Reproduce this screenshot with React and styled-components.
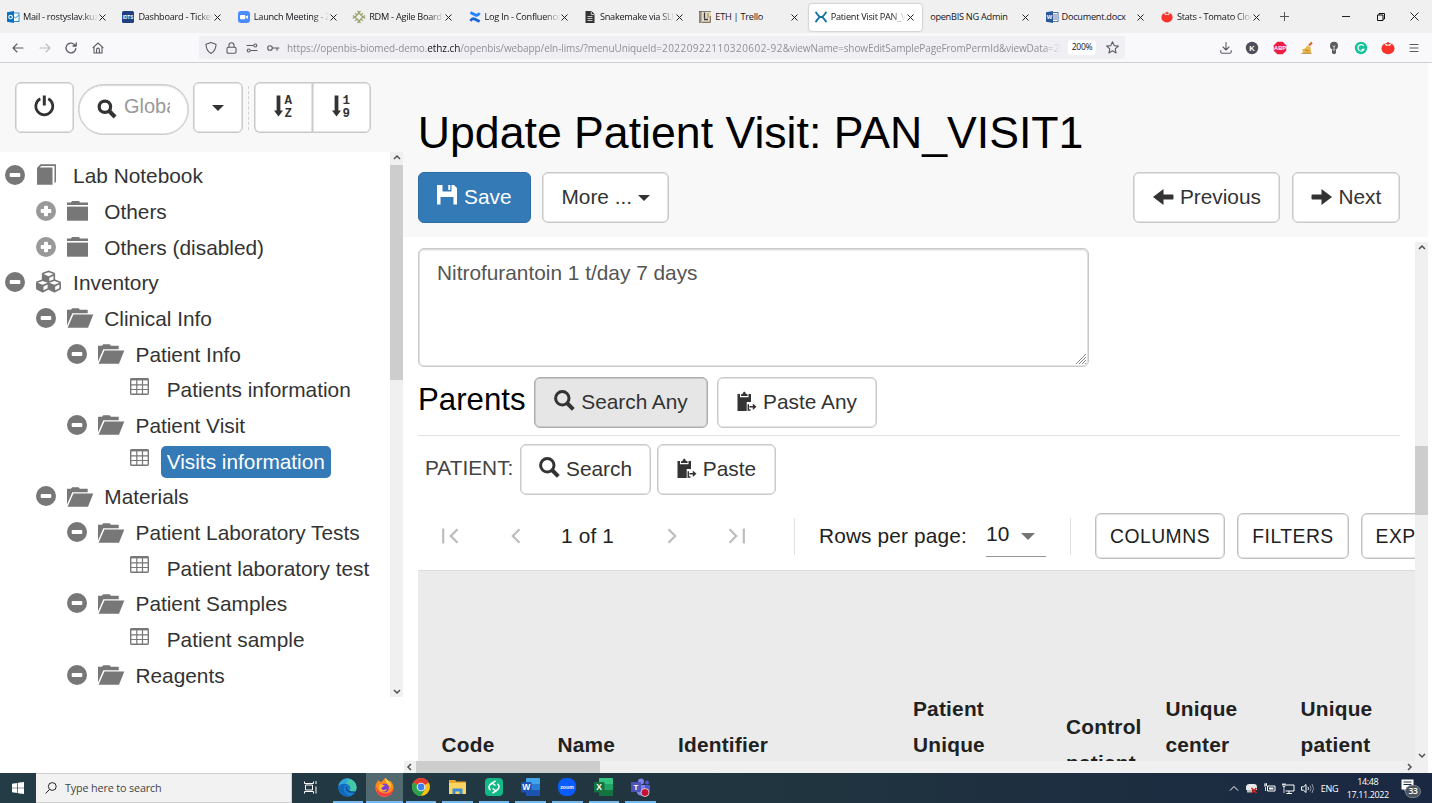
import React from "react";
import styled, { createGlobalStyle, css } from "styled-components";
import { FaCubes } from "react-icons/fa";

const GlobalStyle = createGlobalStyle`
  * { box-sizing: border-box; }
  body { margin: 0; background: #fff; overflow: hidden; }
  svg { display: block; flex: none; overflow: visible; }
`;

const sans = '"Liberation Sans", Arial, sans-serif';
const ui = '"Open Sans", "Noto Sans", sans-serif';

const Screen = styled.div`
  width: 1432px;
  height: 803px;
  display: flex;
  flex-direction: column;
  overflow: hidden;
  font-family: ${sans};
  font-size: 20.83px;
  color: #333;
  background: #fff;
`;

/* ---------- browser chrome ---------- */

const TabStrip = styled.div`
  height: 33px;
  flex: none;
  display: flex;
  align-items: center;
  background: #f0f0f0;
`;
const Tab = styled.div`
  width: 115.4px;
  height: 33px;
  flex: none;
  display: flex;
  align-items: center;
  padding: 3px 2px 2px 1px;
`;
const TabFace = styled.div`
  width: 113px;
  height: 27px;
  display: flex;
  align-items: center;
  padding: 0 8px 0 6px;
  border-radius: 3px;
  ${(p) => p.$active && css`background: #fff; box-shadow: 0 0 2px rgba(0, 0, 0, 0.4);`}
`;
const TabIcon = styled.span`
  width: 12px;
  height: 12px;
  margin-right: 4px;
  flex: none;
`;
const TabTitle = styled.span`
  flex: 1;
  min-width: 0;
  overflow: hidden;
  white-space: nowrap;
  font: 9.2px/14px ${ui};
  letter-spacing: -0.27px;
  color: #15141a;
  ${(p) => p.$fade && css`mask-image: linear-gradient(to right, #000 78%, transparent 99%);`}
`;
const NewTab = styled.div`
  flex: 1;
  padding-left: 10.5px;
`;
const WindowControls = styled.div`
  display: flex;
  align-items: center;
  gap: 25.5px;
  padding-right: 13px;
`;
const NavBar = styled.div`
  height: 30px;
  flex: none;
  display: flex;
  align-items: center;
  background: #f9f9fb;
  border-bottom: 1px solid #cfcfd3;
`;
const NavButtons = styled.div`
  width: 199px;
  flex: none;
  display: flex;
  align-items: center;
  gap: 14.7px;
  padding-left: 12px;
`;
const UrlBar = styled.div`
  width: 926px;
  height: 23px;
  flex: none;
  display: flex;
  align-items: center;
  background: #f0f0f4;
  border-radius: 3px;
  padding: 0 6px;
`;
const UrlIcons = styled.div`
  width: 82px;
  flex: none;
  display: flex;
  align-items: center;
  gap: 9px;
`;
const Url = styled.div`
  width: 775px;
  flex: none;
  overflow: hidden;
  white-space: nowrap;
  font: 10px/16px ${ui};
  letter-spacing: -0.1px;
  color: #8f8f98;
  mask-image: linear-gradient(to right, #000 97.5%, transparent 100%);
  b { font-weight: 400; color: #15141a; }
`;
const UrlDigits = styled.span`
  letter-spacing: 0.45px;
`;
const ZoomBadge = styled.div`
  width: 31px;
  height: 15px;
  margin: 0 10px 0 6px;
  border-radius: 3px;
  background: #fff;
  font: 8.6px/15px ${ui};
  letter-spacing: -0.3px;
  text-align: center;
  color: #15141a;
`;
const Extensions = styled.div`
  flex: 1;
  display: flex;
  align-items: center;
  justify-content: flex-end;
  gap: 13.1px;
  padding-right: 12px;
`;

/* ---------- page ---------- */

const Page = styled.div`
  width: 1428px;
  height: 710px;
  flex: none;
  display: flex;
`;
const Sidebar = styled.aside`
  width: 404px;
  flex: none;
  display: flex;
  flex-direction: column;
`;
const SidebarTools = styled.div`
  height: 89px;
  flex: none;
  display: flex;
  align-items: flex-start;
  padding: 19px 0 0 15px;
  background: #f8f8f8;
`;
const Button = styled.button`
  height: ${(p) => p.$h || 50.6}px;
  width: ${(p) => (p.$w ? p.$w + "px" : "auto")};
  flex: none;
  display: flex;
  align-items: center;
  justify-content: ${(p) => (p.$start ? "flex-start" : "center")};
  gap: 6px;
  padding: 0 0 ${(p) => (p.$mui ? 0 : 1)}px ${(p) => p.$start || 0}px;
  margin: 0 ${(p) => p.$mr || 0}px 0 0;
  font: ${(p) => (p.$mui ? "19.34px" : "20.83px")} ${sans};
  letter-spacing: ${(p) => (p.$mui ? "0.5px" : "0")};
  white-space: nowrap;
  color: #333;
  background: #fff;
  border: 1px solid #c9c9c9;
  box-shadow: inset 0 0 0 0.5px #c9c9c9;
  border-radius: 6px;
  ${(p) => p.$mui && css`color: #212121; border-color: #c0c0c0;`}
  ${(p) => p.$primary && css`color: #fff; background: #337ab7; border-color: #2e6da4; box-shadow: none;`}
  ${(p) => p.$pressed && css`background: #e6e6e6; border-color: #adadad; box-shadow: inset 0 0 0 0.5px #adadad;`}
`;
const Raised = styled.span`
  padding-bottom: 2px;
`;
const SearchPill = styled.div`
  width: 111px;
  height: 50.6px;
  margin: 2px 4px 0;
  display: flex;
  align-items: center;
  padding: 0 17px 7px 18px;
  border: 1.4px solid #ccc;
  border-radius: 26px;
  background: #fff;
  box-shadow: inset 0 0 0 0.5px #ccc, inset 0 1px 2px rgba(0, 0, 0, 0.1);
`;
const SearchHint = styled.span`
  width: 45.5px;
  margin-left: 7px;
  overflow: hidden;
  white-space: nowrap;
  color: #999;
  font-size: 20px;
  line-height: 26px;
`;
const DashedRule = styled.div`
  height: 44px;
  margin: 4px 5px 0;
  border-left: 1px dashed #d0d0d0;
`;
const ButtonGroup = styled.div`
  display: flex;
  > :first-child { border-radius: 6px 0 0 6px; border-right: 0; }
  > :last-child { border-radius: 0 6px 6px 0; }
`;
const TreePane = styled.div`
  height: 545px;
  width: 403px;
  display: flex;
  overflow: hidden;
`;
const Tree = styled.div`
  flex: 1;
  padding-top: 6.3px;
`;
const TreeRow = styled.div`
  height: 35.7px;
  display: flex;
  align-items: center;
  padding-left: ${(p) => 5 + p.$level * 31.2}px;
`;
const TreeToggle = styled.span`
  width: 20px;
  margin: -2px 11px 0 0;
`;
const TreeGlyph = styled.span`
  width: 31px;
  margin-top: ${(p) => p.$shift}px;
  display: flex;
  color: #777;
`;
const TreeLabel = styled.span`
  height: 32px;
  padding: 0 6.5px 0 6.1px;
  line-height: 32.6px;
  border-radius: 5px;
  white-space: nowrap;
  ${(p) => p.$selected && css`color: #fff; background: #337ab7;`}
`;

const ScrollBar = styled.div`
  flex: none;
  display: flex;
  align-items: center;
  justify-content: space-between;
  background: #f0f0f0;
  ${(p) => (p.$horizontal ? css`height: 12px;` : css`width: 13px; flex-direction: column;`)}
`;
const ScrollTrack = styled.div`
  flex: 1;
  align-self: stretch;
  ${(p) => (p.$horizontal ? css`padding-left: ${p.$offset}px;` : css`padding-top: ${p.$offset}px;`)}
`;
const ScrollThumb = styled.div`
  background: #cdcdcd;
  ${(p) => (p.$horizontal ? css`height: 12px; width: ${p.$size}px;` : css`height: ${p.$size}px;`)}
`;
const ArrowBox = styled.span`
  width: 12px;
  height: 12px;
  display: flex;
  align-items: center;
  justify-content: center;
`;

const Main = styled.main`
  flex: 1;
  min-width: 0;
  display: flex;
  flex-direction: column;
`;
const FormHeader = styled.header`
  height: 174px;
  flex: none;
  margin-left: -1px;
  padding: 44px 27.6px 0 14.8px;
  background: #f8f8f8;
`;
const Title = styled.h1`
  margin: 0;
  height: 65px;
  font: 400 44.63px/52px ${sans};
  color: #000;
  white-space: nowrap;
`;
const ActionRow = styled.div`
  display: flex;
  align-items: center;
`;
const Spacer = styled.div`
  flex: 1;
`;
const Caret = styled.i`
  width: 0;
  height: 0;
  border: ${(p) => p.$size || 6}px solid transparent;
  border-top-color: ${(p) => p.$color || "#333"};
  border-bottom: 0;
  margin-top: ${(p) => p.$drop || 3}px;
`;
const FormPane = styled.div`
  height: 519px;
  margin-top: 5px;
  flex: none;
  display: flex;
`;
const FormBody = styled.div`
  flex: 1;
  min-width: 0;
  padding: 6px 0 0 14px;
  overflow: hidden;
`;
const NoteField = styled.div`
  width: 671px;
  height: 119px;
  display: flex;
  justify-content: space-between;
  padding: 9px 1px 1px 18px;
  border: 1px solid #c9c9c9;
  border-radius: 6px;
  box-shadow: inset 0 0 0 0.5px #c9c9c9, inset 0 2px 2px rgba(0, 0, 0, 0.07);
  color: #555;
  line-height: 29px;
  svg { align-self: flex-end; }
`;
const SectionRow = styled.div`
  width: 982px;
  height: 69px;
  display: flex;
  align-items: flex-start;
  padding-top: 10px;
  border-bottom: 1px solid #e0e0e0;
`;
const SectionTitle = styled.h2`
  width: 116px;
  margin: 0;
  font: 400 31.2px/45px ${sans};
  color: #000;
`;
const ParentRow = styled.div`
  height: 67px;
  display: flex;
  align-items: flex-start;
  padding: 8px 0 0 7px;
`;
const ParentLabel = styled.span`
  width: 95px;
  line-height: 47px;
  color: #444;
`;
const Pager = styled.div`
  height: 67px;
  display: flex;
  align-items: center;
  padding: 0 0 1px 19px;
  color: #212121;
  letter-spacing: 0.15px;
  white-space: nowrap;
`;
const PagerIcon = styled.span`
  width: 26px;
  flex: none;
  margin-right: ${(p) => p.$mr}px;
  display: flex;
  justify-content: center;
`;
const PagerText = styled.span`
  width: ${(p) => p.$w}px;
  flex: none;
`;
const PagerRule = styled.span`
  width: 1px;
  height: 37px;
  flex: none;
  margin-right: ${(p) => p.$mr}px;
  background: #e2e2e2;
`;
const Select = styled.div`
  width: 60px;
  height: 41px;
  flex: none;
  display: flex;
  align-items: center;
  justify-content: space-between;
  padding: 0 11px 3px 0;
  margin-right: 24px;
  border-bottom: 1.5px solid #949494;
`;
const HeaderRow = styled.div`
  width: 1100px;
  height: 350px;
  display: flex;
  align-items: center;
  padding: 0 0 2px 23.5px;
  border-top: 1px solid #dcdcdc;
  background: #ebebeb;
`;
const HeaderCell = styled.div`
  width: ${(p) => p.$w}px;
  flex: none;
  padding-bottom: ${(p) => p.$pad || 0}px;
  font-weight: 700;
  letter-spacing: 0.22px;
  line-height: 35.7px;
  white-space: pre-line;
  color: #212121;
`;

/* ---------- taskbar ---------- */

const Taskbar = styled.footer`
  height: 30px;
  flex: none;
  display: flex;
  background: linear-gradient(to right, #233c45, #20343f 55%, #1a2842);
`;
const StartButton = styled.div`
  width: 36px;
  display: flex;
  align-items: center;
  justify-content: center;
`;
const TaskSearch = styled.div`
  width: 256px;
  height: 30px;
  display: flex;
  align-items: center;
  gap: 8px;
  padding-left: 9px;
  border: 1px solid #cfcfcf;
  border-left: 0;
  background: #f2f2f2;
  font: 10.8px/20px ${ui};
  letter-spacing: -0.15px;
  color: #444;
`;
const TaskButton = styled.div`
  width: ${(p) => (p.$first ? 37.5 : 36.6)}px;
  height: 30px;
  flex: none;
  display: flex;
  flex-direction: column;
  align-items: center;
  padding: 5px ${(p) => (p.$focused ? 0 : 3)}px 0;
  background: ${(p) => (p.$focused ? "#526970" : "transparent")};
`;
const RunningBar = styled.span`
  align-self: stretch;
  height: 2px;
  margin-top: auto;
  background: ${(p) => (p.$on ? "#76b9ed" : "transparent")};
`;
const Tray = styled.div`
  display: flex;
  align-items: center;
  gap: 6.2px;
  padding-right: 12px;
  color: #fff;
  font: 9px/13px ${ui};
  letter-spacing: -0.4px;
`;
const Clock = styled.div`
  width: 44px;
  margin-right: 5px;
  text-align: center;
  white-space: nowrap;
`;
const Lang = styled.span`
  width: 19px;
  letter-spacing: -0.2px;
`;
const Notifications = styled.div`
  width: 19px;
  height: 20px;
  position: relative;
`;
const Count = styled.span`
  position: absolute;
  left: 4px;
  top: 7px;
  width: 16px;
  height: 13px;
  border-radius: 7px;
  background: #4a535e;
  border: 1px solid #7a838c;
  font: 600 8.6px/11px ${ui};
  text-align: center;
`;

/* ---------- icons ---------- */

const Svg = ({ w = 12, h = w, vb, children, ...rest }) => (
  <svg width={w} height={h} viewBox={vb || `0 0 ${w} ${h}`} fill="none" {...rest}>
    {children}
  </svg>
);
const Letter = ({ x, y, size, fill = "#fff", family = "Liberation Sans, sans-serif", children }) => (
  <text x={x} y={y} fontSize={size} fontWeight="700" fill={fill} textAnchor="middle" fontFamily={family} letterSpacing="0">
    {children}
  </text>
);
const Cross = ({ s = 7 }) => (
  <Svg w={s}><path d={`M.5.5 ${s - 0.5} ${s - 0.5}M${s - 0.5}.5.5 ${s - 0.5}`} stroke="#222" /></Svg>
);
const Tomato = ({ w = 12 }) => (
  <Svg w={w} vb="0 0 12 12">
    <ellipse cx="6" cy="6.4" rx="5.6" ry="5" fill="#f9322c" />
    <path d="M2.6 2 6 3 9.4 2 7.6 4.3 6 3.8 4.4 4.3Z" fill="#fde9e2" />
    <path d="M6 3V.8" stroke="#d22" />
  </Svg>
);

const tabIcons = {
  mail: (
    <Svg><rect x="5" y="2" width="7" height="8.5" fill="#fff" stroke="#2a8dd4" /><path d="M5 4l3.5 3L12 4" stroke="#2a8dd4" /><path d="M0 1.2 7 0v12L0 10.8z" fill="#0a71c4" /><circle cx="3.6" cy="6" r="1.8" stroke="#fff" strokeWidth="1.1" /></Svg>
  ),
  dash: (<Svg><rect width="12" height="12" rx="1.5" fill="#1f3f7f" /><Letter x={6} y={7.8} size={4.6}>IDTS</Letter></Svg>),
  zoom: (<Svg><rect width="12" height="12" rx="3" fill="#4a8cff" /><rect x="2" y="4" width="5.4" height="4.2" rx="1" fill="#fff" /><path d="M7.9 5.6 10 4.2v3.8L7.9 6.6z" fill="#fff" /></Svg>),
  rdm: (<Svg><path d="M6 2 10 6 6 10 2 6Z" stroke="#9aa36b" strokeWidth="1.4" /><path d="M4.5 0 6 1.6 7.5 0M4.5 12 6 10.4 7.5 12M0 4.5 1.6 6 0 7.5M12 4.5 10.4 6 12 7.5M2.2 2.2l1.4 1.4M9.8 2.2 8.4 3.6M2.2 9.8l1.4-1.4M9.8 9.8 8.4 8.4" stroke="#9aa36b" strokeWidth="1.3" /></Svg>),
  conf: (<Svg><path d="M.3 9.2c2-3 3.6-3.6 6-2.4l5 2.4-1.3 2.6-4.6-2.2c-1.5-.7-2-.2-2.9 1.1z" fill="#1868db" /><path d="M11.7 2.8c-2 3-3.6 3.6-6 2.4l-5-2.4L2 .2l4.6 2.2c1.5.7 2 .2 2.9-1.1z" fill="#2684ff" /></Svg>),
  snake: (<Svg><path d="M1.5 0h6L10.5 3v9h-9z" fill="#333" /><path d="M3.5 5.5h5M3.5 7.5h5M3.5 9.5h5M7.3.5v3h3" stroke="#f0f0f0" strokeWidth=".8" /></Svg>),
  trello: (<Svg><rect width="12" height="12" fill="#e4dccb" /><rect width="2.5" height="12" fill="#8d877b" /><path d="M5.5 1.5v6M5 8.5h4" stroke="#3c3a37" strokeWidth="1.3" /><rect x="8" y="2" width="2" height="5" fill="#c9ac7e" /><path d="M3 11.3h8.3V5" stroke="#6c5a48" /><path d="M0 .5h12" stroke="#5a564e" strokeWidth=".7" /></Svg>),
  bis: (<Svg><path d="M.8.8c.9 2.6 2.7 3.7 4 5.2-1.3 1.5-3.1 2.6-4 5.2M11.2.8c-.9 2.6-2.7 3.7-4 5.2 1.3 1.5 3.1 2.6 4 5.2" stroke="#12719f" strokeWidth="1.9" /><path d="M4.5 6h3" stroke="#12719f" strokeWidth="2" /></Svg>),
  word: (<Svg><rect x="6" y="1.5" width="6" height="9" fill="#fff" stroke="#2a579a" strokeWidth=".8" /><path d="M7 4h4M7 6h4M7 8h4" stroke="#2a579a" strokeWidth=".8" /><path d="M0 1.2 7 0v12L0 10.8z" fill="#2a579a" /><Letter x={3.5} y={8.2} size={5.8}>W</Letter></Svg>),
  tomato: <Tomato />,
};

const tabs = [
  { icon: "mail", title: "Mail - rostyslav.kuzyk", fade: true },
  { icon: "dash", title: "Dashboard - Ticket", fade: true },
  { icon: "zoom", title: "Launch Meeting - Z", fade: true },
  { icon: "rdm", title: "RDM - Agile Board", fade: true },
  { icon: "conf", title: "Log In - Confluence", fade: true },
  { icon: "snake", title: "Snakemake via SLUR", fade: true },
  { icon: "trello", title: "ETH | Trello" },
  { icon: "bis", title: "Patient Visit PAN_VIS", fade: true, active: true },
  { title: "openBIS NG Admin" },
  { icon: "word", title: "Document.docx" },
  { icon: "tomato", title: "Stats - Tomato Clock", fade: true },
];

const stroke = { stroke: "#5b5b66", strokeWidth: 1.1, strokeLinecap: "round", strokeLinejoin: "round" };

function BrowserChrome() {
  return (
    <>
      <TabStrip>
        {tabs.map((t) => (
          <Tab key={t.title}>
            <TabFace $active={t.active}>
              {t.icon && <TabIcon>{tabIcons[t.icon]}</TabIcon>}
              <TabTitle $fade={t.fade}>{t.title}</TabTitle>
              <Cross />
            </TabFace>
          </Tab>
        ))}
        <NewTab><Svg w={9}><path d="M4.5 0v9M0 4.5h9" stroke="#555" /></Svg></NewTab>
        <WindowControls>
          <Svg w={9}><path d="M0 4.5h8" stroke="#222" /></Svg>
          <Svg w={8}><path d="M.5 2h5.5v5.5H.5zM2 2V.5h5.5V6H6" stroke="#111" /></Svg>
          <Cross s={9} />
        </WindowControls>
      </TabStrip>
      <NavBar>
        <NavButtons>
          <Svg {...stroke}><path d="M11 6H1M5 2 1 6l4 4" /></Svg>
          <Svg {...stroke} stroke="#bcbcc2"><path d="M1 6h10M7 2l4 4-4 4" /></Svg>
          <Svg {...stroke} strokeWidth="1.3"><path d="M10.8 6.5A4.9 4.9 0 1 1 9.3 2.5L11 4M11.2.8V4H8" /></Svg>
          <Svg {...stroke}><path d="M1 5.6 6 1l5 4.6M2 5v6h8V5M4.6 11V7.5a1.4 1.4 0 0 1 2.8 0V11" /></Svg>
        </NavButtons>
        <UrlBar>
          <UrlIcons>
            <Svg {...stroke}><path d="M6 .6 11 2.3c0 4.5-1 7-5 9.2C2 9.3 1 6.8 1 2.3Z" /></Svg>
            <Svg {...stroke} w={11} h={12}><rect x="1" y="5.3" width="9" height="6" rx="1.2" /><path d="M3 5V3.2a2.5 2.5 0 0 1 5 0V5" /></Svg>
            <Svg {...stroke}><path d="M1 3.5h6M5 8.5h6" /><circle cx="9.3" cy="3.5" r="1.5" /><circle cx="2.7" cy="8.5" r="1.5" /></Svg>
            <Svg {...stroke}><circle cx="3" cy="6" r="2.3" /><path d="M5.5 6H12M10 6v2.2" /></Svg>
          </UrlIcons>
          <Url>
            https://openbis-biomed-demo.<b>ethz.ch</b>
            /openbis/webapp/eln-lims/?menuUniqueId=<UrlDigits>20220922110320602-92</UrlDigits>&amp;viewName=showEditSamplePageFromPermId&amp;viewData=202
          </Url>
          <ZoomBadge>200%</ZoomBadge>
          <Svg {...stroke} w={13}><path d="M6.5.8 8.2 4.6l4.2.4-3.2 2.8.9 4.2-3.6-2.2L2.9 12l.9-4.2L.6 5l4.2-.4Z" /></Svg>
        </UrlBar>
        <Extensions>
          <Svg {...stroke} w={12}><path d="M6 .5v7M3 5l3 3 3-3M.8 8.5v1.2a1.5 1.5 0 0 0 1.5 1.5h7.4a1.5 1.5 0 0 0 1.5-1.5V8.5" /></Svg>
          <Svg w={14}><circle cx="7" cy="7" r="6.2" fill="#4f4f5c" /><Letter x={7} y={9.8} size={7.6}>K</Letter></Svg>
          <Svg w={14}><path d="M4.3.8h5.4l3.5 3.5v5.4l-3.5 3.5H4.3L.8 9.7V4.3z" fill="#ed1e45" /><Letter x={7} y={9} size={5.6}>ABP</Letter></Svg>
          <Svg w={14}><path d="M12 1.5 9 4.5" stroke="#d9652c" strokeWidth="2.2" /><path d="M2 8.5Q6 8 7 4.5l3.5 1.5.5 6H3.5z" fill="#e9b64a" /><path d="M5 9l4 1M1.5 12.3h10" stroke="#b9802b" /></Svg>
          <Svg w={14}><circle cx="7" cy="4.8" r="4" fill="#5b5b5b" /><path d="M5 8.5h4v3.7l-2 1-2-1z" fill="#5b5b5b" /><path d="M5.8 4.5 7 6l1.2-1.5M7 6v4" stroke="#eee" strokeWidth=".8" /></Svg>
          <Svg w={14}><circle cx="7" cy="7" r="6.2" fill="#15c39a" /><path d="M9.8 5A3.2 3.2 0 1 0 10 8.3H7.8" stroke="#fff" strokeWidth="1.2" /></Svg>
          <Tomato w={14} />
          <Svg w={12}><path d="M1.5 2.5h9M1.5 6h9M1.5 9.5h9" stroke="#5b5b66" /></Svg>
        </Extensions>
      </NavBar>
    </>
  );
}

const Magnifier = () => (
  <Svg w={21}><circle cx="8.3" cy="8.3" r="6.7" stroke="currentColor" strokeWidth="3" /><path d="m13 13 6.3 6.3" stroke="currentColor" strokeWidth="4" /></Svg>
);
const PasteIcon = () => (
  <Svg w={20} vb="0 .5 20 20">
    <path d="M.5 2.5H3v3.2h8.5V2.5H14v8H9.7V19.5H.5z" fill="currentColor" />
    <path d="M4 4.5V3l2-.9C6 .8 6.6.2 7.3.2s1.3.6 1.3 1.9l2 .9v1.5z" fill="currentColor" />
    <path d="M11.3 12.8V18.5h2.2M12.5 15.2h4" stroke="currentColor" strokeWidth="1.5" />
    <path d="M15.8 12 19.5 15.2 15.8 18.4z" fill="currentColor" />
  </Svg>
);
const Toggle = ({ open }) => (
  <Svg w={20}>
    <circle cx="10" cy="10" r="10" fill={open ? "#777" : "#999"} />
    <rect x="4.7" y="8" width="10.6" height="4" rx="1" fill="#fff" />
    {!open && <rect x="8" y="4.7" width="4" height="10.6" rx="1" fill="#fff" />}
  </Svg>
);
const glyphs = {
  book: (<Svg w={21}><path d="M1 4 4.5.3H20v17.5l-1.5 1.5V2H5.2L3.8 3.5H16.5V20.7H1z" fill="#777" /></Svg>),
  folder: (<Svg w={22} h={20}><path d="M0 4V1.5h4L5 0h7l1 1.5h8V4z" fill="#777" /><path d="M0 5.6h21V19.7H0z" fill="#777" /></Svg>),
  folderOpen: (<Svg w={27} h={20}><path d="M0 17.5V1.8h4L5.2.2h6.5l1.2 1.6h7.8v3.4H5.3z" fill="#777" /><path d="M6.4 6.6H26.3L21 19.7H.6z" fill="#777" /></Svg>),
  table: (<Svg w={20} h={17}><rect x=".7" y=".7" width="17.6" height="15.6" rx="1" stroke="#777" strokeWidth="1.4" /><path d="M.5 1.5h18" stroke="#777" strokeWidth="1.8" /><path d="M0 6.8h19M0 11.5h19M6.8 2v14M12.5 2v14" stroke="#777" strokeWidth="1.2" /></Svg>),
  cubes: <FaCubes size={25} />,
};
const glyphShift = { book: -3, folder: -1, folderOpen: -1, table: -8, cubes: -4 };
const nodes = [
  [0, "book", "Lab Notebook", true],
  [1, "folder", "Others", false],
  [1, "folder", "Others (disabled)", false],
  [0, "cubes", "Inventory", true],
  [1, "folderOpen", "Clinical Info", true],
  [2, "folderOpen", "Patient Info", true],
  [3, "table", "Patients information"],
  [2, "folderOpen", "Patient Visit", true],
  [3, "table", "Visits information"],
  [1, "folderOpen", "Materials", true],
  [2, "folderOpen", "Patient Laboratory Tests", true],
  [3, "table", "Patient laboratory test"],
  [2, "folderOpen", "Patient Samples", true],
  [3, "table", "Patient sample"],
  [2, "folderOpen", "Reagents", true],
];

const arrowPaths = { up: "M1 5 4 2l3 3", down: "M1 3l3 3 3-3", left: "M5 1 2 4l3 3", right: "M3 1l3 3-3 3" };
const Arrow = ({ dir }) => (
  <ArrowBox><Svg w={8}><path d={arrowPaths[dir]} stroke="#505050" strokeWidth="1.5" /></Svg></ArrowBox>
);
const Scroller = ({ horizontal, offset, size }) => (
  <ScrollBar $horizontal={horizontal}>
    <Arrow dir={horizontal ? "left" : "up"} />
    <ScrollTrack $horizontal={horizontal} $offset={offset}>
      <ScrollThumb $horizontal={horizontal} $size={size} />
    </ScrollTrack>
    <Arrow dir={horizontal ? "right" : "down"} />
  </ScrollBar>
);

const SortIcon = ({ top, bottom }) => (
  <Svg w={20} h={22} vb="0 .5 20 22">
    <path d="M2.6 0h3.8v15H9L4.5 21 0 15h2.6z" fill="#333" />
    <Letter x={14.3} y={8.7} size={12.5} fill="#333" family="Liberation Mono, monospace">{top}</Letter>
    <Letter x={14.3} y={21} size={12.5} fill="#333" family="Liberation Mono, monospace">{bottom}</Letter>
  </Svg>
);

function SidebarPanel() {
  return (
    <Sidebar>
      <SidebarTools>
        <Button $w={59}>
          <Svg w={21} vb="0 .5 21 21"><path d="M6.3 3.3a8.5 8.5 0 1 0 8 0" stroke="#333" strokeWidth="2.7" /><path d="M10.3 0v10" stroke="#333" strokeWidth="3" /></Svg>
        </Button>
        <SearchPill>
          <Svg w={20} vb="0 -3 21 21"><circle cx="8.3" cy="8.3" r="6" stroke="#333" strokeWidth="3.4" /><path d="m13 13 6 6" stroke="#333" strokeWidth="4.4" /></Svg>
          <SearchHint>Global Search</SearchHint>
        </SearchPill>
        <Button $w={50}><Caret /></Button>
        <DashedRule />
        <ButtonGroup>
          <Button $w={58}><SortIcon top="A" bottom="Z" /></Button>
          <Button $w={59}><SortIcon top="1" bottom="9" /></Button>
        </ButtonGroup>
      </SidebarTools>
      <TreePane>
        <Tree>
          {nodes.map(([level, glyph, label, open]) => (
            <TreeRow key={label} $level={level}>
              <TreeToggle>{open !== undefined && <Toggle open={open} />}</TreeToggle>
              <TreeGlyph $shift={glyphShift[glyph]}>{glyphs[glyph]}</TreeGlyph>
              <TreeLabel $selected={label === "Visits information"}>{label}</TreeLabel>
            </TreeRow>
          ))}
        </Tree>
        <Scroller offset={1} size={215} />
      </TreePane>
    </Sidebar>
  );
}

const ArrowGlyph = ({ flip }) => (
  <Svg w={21} h={18}><path transform={flip ? "translate(21 0) scale(-1 1)" : undefined} d="M0 9 10.5 1v5.4H19.5a1 1 0 0 1 1 1v3.2a1 1 0 0 1-1 1H10.5V17z" fill="#333" /></Svg>
);
const Chevron = ({ dir, bar }) => (
  <Svg w={18} h={16}>
    <g transform={dir === "right" ? "translate(18 0) scale(-1 1)" : undefined} stroke="#bdbdbd" strokeWidth="2.2">
      <path d={bar ? "M16.5 1.3 9.8 8l6.7 6.7M2.2.5v15" : "M12.5 1.3 5.8 8l6.7 6.7"} />
    </g>
  </Svg>
);

function MainPanel() {
  return (
    <Main>
      <FormHeader>
        <Title>Update Patient Visit: PAN_VISIT1</Title>
        <ActionRow>
          <Button $primary $w={113} $mr={11.5}>
            <Svg w={21} h={20} vb="0 2 21 20"><path d="M0 0h5.5v6.5h9V0h2.5l3 3v16.5h-3.5v-7.5h-13v7.5H0z M11.3 0h2v5h-2z" fill="#fff" /></Svg>
            Save
          </Button>
          <Button $w={127}>More ...<Caret /></Button>
          <Spacer />
          <Button $w={147} $mr={12}><ArrowGlyph />Previous</Button>
          <Button $w={108}><ArrowGlyph flip />Next</Button>
        </ActionRow>
      </FormHeader>
      <FormPane>
        <FormBody>
          <NoteField>
            Nitrofurantoin 1 t/day 7 days
            <Svg w={12}><path d="M1 11 11 1M4 11l7-7M7 11l4-4M10 11l1-1" stroke="#777" strokeWidth=".9" /></Svg>
          </NoteField>
          <SectionRow>
            <SectionTitle>Parents</SectionTitle>
            <Button $pressed $w={174} $mr={9}><Raised><Magnifier /></Raised>Search Any</Button>
            <Button $w={160}><PasteIcon />Paste Any</Button>
          </SectionRow>
          <ParentRow>
            <ParentLabel>PATIENT:</ParentLabel>
            <Button $w={131} $mr={6}><Raised><Magnifier /></Raised>Search</Button>
            <Button $w={119}><PasteIcon />Paste</Button>
          </ParentRow>
          <Pager>
            <PagerIcon $mr={40}><Chevron bar /></PagerIcon>
            <PagerIcon $mr={32}><Chevron /></PagerIcon>
            <PagerText $w={97.5}>1 of 1</PagerText>
            <PagerIcon $mr={39}><Chevron dir="right" /></PagerIcon>
            <PagerIcon $mr={44.5}><Chevron dir="right" bar /></PagerIcon>
            <PagerRule $mr={24} />
            <PagerText $w={167}>Rows per page:</PagerText>
            <Select>10<Caret $size={7.5} $drop={5} $color="#757575" /></Select>
            <PagerRule $mr={24} />
            <Button $mui $w={130} $h={46} $mr={12}>COLUMNS</Button>
            <Button $mui $w={112} $h={46} $mr={12}>FILTERS</Button>
            <Button $mui $w={130} $h={46} $start={13.5}>EXPORTS</Button>
          </Pager>
          <HeaderRow>
            <HeaderCell $w={116}>Code</HeaderCell>
            <HeaderCell $w={120.5}>Name</HeaderCell>
            <HeaderCell $w={235}>Identifier</HeaderCell>
            <HeaderCell $w={153} $pad={35.7}>{"Patient\nUnique"}</HeaderCell>
            <HeaderCell $w={99.5}>{"Control\npatient"}</HeaderCell>
            <HeaderCell $w={135} $pad={35.7}>{"Unique\ncenter"}</HeaderCell>
            <HeaderCell $w={120} $pad={35.7}>{"Unique\npatient"}</HeaderCell>
          </HeaderRow>
        </FormBody>
        <Scroller offset={192} size={69} />
      </FormPane>
      <ActionRow>
        <Spacer><Scroller horizontal offset={0} size={184} /></Spacer>
        <ScrollBar $horizontal><ScrollTrack $horizontal $offset={13} /></ScrollBar>
      </ActionRow>
    </Main>
  );
}

const Office = ({ letter, dark, light, mid }) => (
  <Svg w={19} h={18}>
    <rect x="5" y="0" width="14" height="18" rx="1.2" fill={mid} />
    <path d="M5 1.2A1.2 1.2 0 0 1 6.2 0h11.6A1.2 1.2 0 0 1 19 1.2V6H5z" fill={light} />
    <path d="M5 12h14v4.8a1.2 1.2 0 0 1-1.2 1.2H6.2A1.2 1.2 0 0 1 5 16.8z" fill={dark} />
    <rect x="0" y="4" width="10.5" height="10.5" rx="1" fill={dark} />
    <Letter x={5.2} y={12.3} size={8.5}>{letter}</Letter>
  </Svg>
);

const apps = [
  { key: "view", first: true, icon: (<Svg w={14} h={18}><path d="M1.5 7h7v5h-7zM.5 3.5v2h9v-2M.5 15.5v-2h9v2M12 3v3M12 8.5v7" stroke="#fff" /></Svg>) },
  { key: "edge", on: true, icon: (
    <Svg w={19}><circle cx="9.5" cy="9.5" r="9.2" fill="#1b7fd0" /><path d="M.5 8A9.2 9.2 0 0 1 18.7 9.5c0 3-2.2 4.5-4.7 4.5-2 0-2.6-1-2-2 1.5-3-.5-6-4-6C4 6 1.5 7 .5 8z" fill="#45c9a4" /><path d="M.5 8A9.2 9.2 0 0 1 11 .4L8 6C4 6 1.5 7 .5 8z" fill="#2fa6dd" /><path d="M8 7c-3.5 1-3.5 9 4 10.5C7 20 0 16 .5 9 2 5.5 7 5 9.5 7z" fill="#1268bd" /><path d="M9 8.5c-1.5 2 0 6.3 5.5 5.5l2.8.5" stroke="#0f4d97" strokeWidth="1.5" /></Svg>) },
  { key: "firefox", on: true, focused: true, icon: (
    <Svg w={19}><path d="M1 6C2 4.5 2.5 3.5 3 2c.8 1 1.5 1.3 2.5 2C7.5 3.5 8.5 2 10 0c2.5 1.5 3 3 4 4l.8-1.5C17.5 4.5 18.5 7 18.5 10a9 9 0 0 1-18 0c0-1.5 0-3 .5-4z" fill="#ff8a1c" /><path d="M1 8c0 7 4 10.5 8.5 10.5S18 15.5 18.4 11c-2 3-4 4.5-7.4 4.5C6 15.5 2 13 1 8z" fill="#f5364f" /><circle cx="9.7" cy="10" r="4.2" fill="#7a3fd6" /><path d="M4.5 6.5c2-1 3 .5 5 .5 0 2-3 1.5-3 3.5 0 1.5 3 2.5 5.5.5-1.5 4-7.5 3-8.5-.5z" fill="#ffbd2e" /><path d="M10 0c2.5 2 7 4.5 6 10-1-4-6-4-6-10z" fill="#ffd43b" /></Svg>) },
  { key: "chrome", on: true, icon: (
    <Svg w={18}><circle cx="9" cy="9" r="9" fill="#fbc116" /><path d="M9 9 1.2 4.5A9 9 0 0 1 16.8 4.5z" fill="#e33b2e" /><path d="M9 9 1.2 4.5A9 9 0 0 0 9 18l4-7z" fill="#2ba24c" /><circle cx="9" cy="9" r="4.3" fill="#fff" /><circle cx="9" cy="9" r="3.4" fill="#3f7fe8" /></Svg>) },
  { key: "files", on: true, icon: (
    <Svg w={17}><path d="M0 2h6l1.5 1.5H17V16H0z" fill="#e8a92c" /><path d="M0 5h17v11H0z" fill="#fcd462" /><path d="M3.5 16v-5.5h10V16h-3v-2.5h-4V16z" fill="#3c8fd8" /></Svg>) },
  { key: "sync", on: true, icon: (
    <Svg w={18}><rect width="18" height="18" rx="4" fill="#12b886" /><path d="M10.5 3 7 5l3.5 2.5M7 5.5C3.5 6.5 3 10.5 5.5 12M7.5 15l3.5-2-3.5-2.5M11 12.5c3.500-1 4-5 1.500-6.500" stroke="#fff" strokeWidth="1.5" /></Svg>) },
  { key: "word", on: true, icon: <Office letter="W" dark="#1d53b0" mid="#2b7cd3" light="#41a5ee" /> },
  { key: "zoom", on: true, icon: (<Svg w={18}><rect width="18" height="18" rx="8" fill="#0b5cff" /><Letter x={9} y={10.8} size={5.2}>zoom</Letter></Svg>) },
  { key: "excel", on: true, icon: <Office letter="X" dark="#15733f" mid="#21a366" light="#33c481" /> },
  { key: "teams", on: true, icon: (
    <Svg w={19}><circle cx="10" cy="3.5" r="3" fill="#7b83eb" /><circle cx="16" cy="4.5" r="2" fill="#5059c9" /><path d="M6 7h8.5v7a4.5 4.5 0 0 1-8.5 1z" fill="#7b83eb" /><path d="M15 7h4v5a3 3 0 0 1-4 3z" fill="#5059c9" /><rect x="0" y="4" width="10" height="10" rx="1" fill="#4b53bc" /><Letter x={5} y={12} size={8}>T</Letter><circle cx="14" cy="14.5" r="4" fill="#c4112f" stroke="#e7e7ee" strokeWidth=".8" /></Svg>) },
];

function TaskbarPanel() {
  return (
    <Taskbar>
      <StartButton><Svg w={12}><path d="M0 1.7 5.2.9v4.8H0zM5.9.8 12 0v5.7H5.9zM0 6.3h5.2v4.8L0 10.3zM5.9 6.3H12V12l-6.1-.8z" fill="#fff" /></Svg></StartButton>
      <TaskSearch>
        <Svg w={12}><circle cx="7.3" cy="4.5" r="3.9" stroke="#222" /><path d="M4.5 7.5.6 11.5" stroke="#222" /></Svg>
        Type here to search
      </TaskSearch>
      {apps.map((a) => (
        <TaskButton key={a.key} $first={a.first} $focused={a.focused}>{a.icon}<RunningBar $on={a.on} /></TaskButton>
      ))}
      <Spacer />
      <Tray>
        <Svg w={10} h={8}><path d="M1 6.5 5 2.5l4 4" stroke="#fff" /></Svg>
        <Svg w={13} h={12}><path d="M1 8V4.5A3 3 0 0 1 4 2h5a3 3 0 0 1 3 3v3z" fill="#e8e8e8" /><rect x="2" y="8" width="5" height="2.5" fill="#bbb" /><path d="m6.5 6 5 5m0-5-5 5" stroke="#e02020" strokeWidth="1.6" /></Svg>
        <Svg w={12} h={10}><path d="M3.5 3H11v5H3.5z" stroke="#fff" /><path d="M5 4.5h4.5v2H5z" fill="#fff" /><path d="M0 2h3M1 0v4M2.5 0v3M1.5 4v4" stroke="#fff" strokeWidth=".8" /></Svg>
        <Svg w={13} h={11}><path d="M3.5 2H12v6H3.5M7 8v2.5M4.5 10.5H10" stroke="#fff" /><path d="M0 1.5h3.5M1 0v3.5h2V0M2 3.5V10" stroke="#fff" strokeWidth=".8" /></Svg>
        <Svg w={13} h={11}><path d="M.5 3.8h2L5 1.5v8L2.5 7.2h-2zM7 4q1 1.5 0 3" stroke="#fff" /><path d="M9 2.5q2 3 0 6M11 1q3 4.5 0 9" stroke="#8993a3" /></Svg>
        <Lang>ENG</Lang>
        <Clock>14:48<br />17.11.2022</Clock>
        <Notifications>
          <Svg w={13} h={14}><path d="M.5 1.5h12v10H5L3.5 13.5v-2h-3z" fill="#fff" /><path d="M2.5 4h8M2.5 6.5h8" stroke="#1b2942" /></Svg>
          <Count>33</Count>
        </Notifications>
      </Tray>
    </Taskbar>
  );
}

export default function App() {
  return (
    <Screen>
      <GlobalStyle />
      <BrowserChrome />
      <Page>
        <SidebarPanel />
        <MainPanel />
      </Page>
      <TaskbarPanel />
    </Screen>
  );
}
